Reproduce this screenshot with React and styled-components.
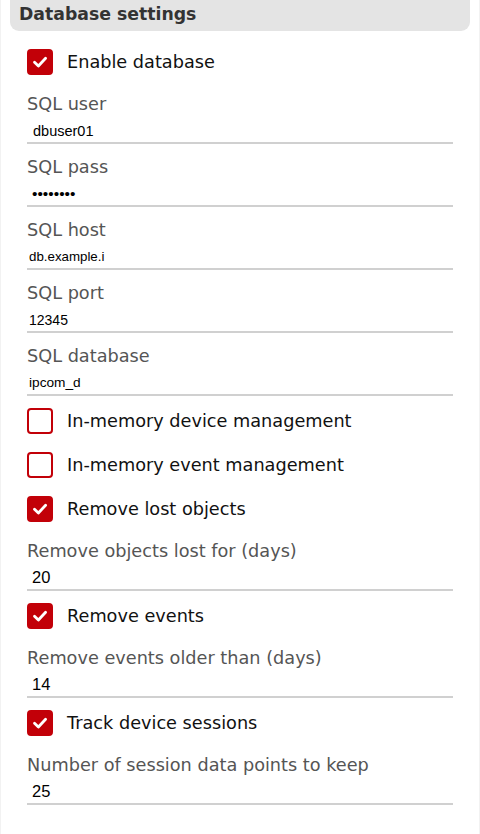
import React from "react"
import styled, { createGlobalStyle } from "styled-components"

const GlobalStyle = createGlobalStyle`
  html, body {
    margin: 0;
    padding: 0;
    background: #fff;
  }
  body {
    font-family: "DejaVu Sans", Verdana, sans-serif;
  }
`

const Page = styled.div`
  min-height: 834px;
  box-sizing: border-box;
  border-left: 1px solid #f2f2f2;
  border-right: 1px solid #f2f2f2;
`

const Header = styled.div`
  margin: 0 9px;
  height: 31px;
  box-sizing: border-box;
  padding: 0 0 2px 9px;
  background: #e4e4e4;
  border-radius: 0 0 9px 9px;
  font-family: "DejaVu Sans", Verdana, sans-serif;
  font-weight: bold;
  font-size: 17.3px;
  line-height: 29px;
  color: #333;
`

const Body = styled.div`
  display: flex;
  flex-direction: column;
  padding: 17px 26px 0 26px;
`

const CheckRow = styled.label`
  display: flex;
  align-items: center;
  gap: 14px;
  height: 28px;
  margin-bottom: 16px;
  font-size: 17.7px;
  line-height: 30px;
  color: #111;
  cursor: pointer;
`

const Box = styled.span`
  display: flex;
  align-items: center;
  justify-content: center;
  width: 26px;
  height: 26px;
  box-sizing: border-box;
  border-radius: 4px;
  border: 2px solid #c20008;
  background: ${props => (props.checked ? "#c20008" : "#fff")};
  flex-shrink: 0;
`

const Field = styled.div`
  display: flex;
  flex-direction: column;
  margin-bottom: 11px;
`

const Label = styled.div`
  height: 22px;
  line-height: 24px;
  font-size: 17.7px;
  color: #555;
  white-space: nowrap;
`

const Input = styled.input`
  height: 30px;
  box-sizing: border-box;
  margin: 0;
  padding: 5px 0 0 ${props => props.indent || 2}px;
  border: 0;
  border-bottom: 2px solid #d0d0d0;
  outline: none;
  background: transparent;
  font-family: "Liberation Sans", Arial, sans-serif;
  font-size: ${props => props.size || 13.3}px;
  color: #000;
`

const Check = () => (
  <svg width="18" height="18" viewBox="0 0 18 18">
    <path
      d="M3.5 9.2 L7.4 13 L14.6 5.2"
      fill="none"
      stroke="#fff"
      strokeWidth="2.8"
      strokeLinecap="round"
      strokeLinejoin="round"
    />
  </svg>
)

const CheckItem = ({ checked, children }) => (
  <CheckRow>
    <Box checked={checked}>{checked && <Check />}</Box>
    {children}
  </CheckRow>
)

const TextField = ({ label, value, type = "text", size, indent }) => (
  <Field>
    <Label>{label}</Label>
    <Input type={type} defaultValue={value} size={size} indent={indent} />
  </Field>
)

export default function App() {
  return (
    <Page>
      <GlobalStyle />
      <Header>Database settings</Header>
      <Body>
        <CheckItem checked>Enable database</CheckItem>
        <TextField label="SQL user" value="dbuser01" size={14.5} indent={6} />
        <TextField label="SQL pass" value="password" type="password" size={15.5} indent={5} />
        <TextField label="SQL host" value="db.example.i" />
        <TextField label="SQL port" value="12345" size={14} />
        <TextField label="SQL database" value="ipcom_d" size={13.7} />
        <CheckItem>In-memory device management</CheckItem>
        <CheckItem>In-memory event management</CheckItem>
        <CheckItem checked>Remove lost objects</CheckItem>
        <TextField label="Remove objects lost for (days)" value="20" size={16.5} indent={5} />
        <CheckItem checked>Remove events</CheckItem>
        <TextField label="Remove events older than (days)" value="14" size={16.5} indent={5} />
        <CheckItem checked>Track device sessions</CheckItem>
        <TextField label="Number of session data points to keep" value="25" size={16.5} indent={5} />
      </Body>
    </Page>
  )
}
